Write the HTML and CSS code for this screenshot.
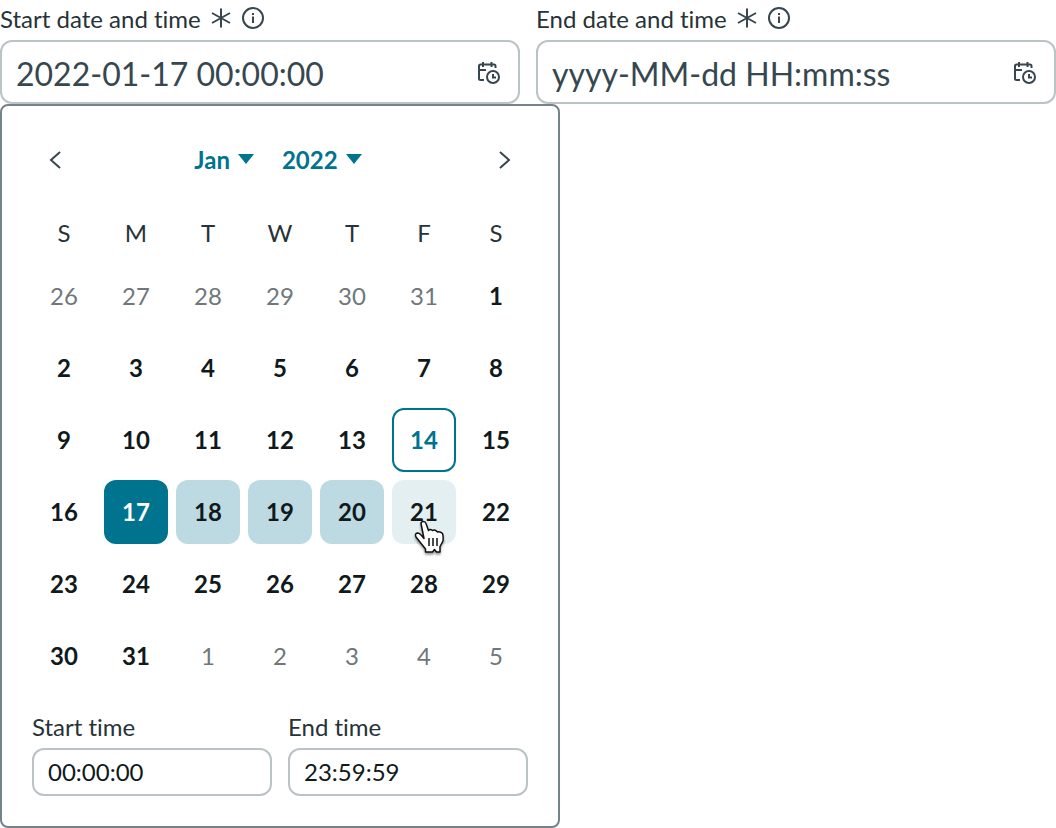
FILE: index.html
```html
<!DOCTYPE html>
<html lang="en">
<head>
  <meta charset="UTF-8">
  <meta name="viewport" content="width=device-width, initial-scale=1.0">
  <title>Date and time range</title>
  <link rel="stylesheet" href="styles.css">
</head>
<body>
  <svg class="sprite" aria-hidden="true">
    <symbol id="asterisk" viewBox="0 0 20 20">
      <path d="M10 0.5V19.5M1 5L19 15M1 15L19 5" />
    </symbol>
    <symbol id="info" viewBox="0 0 24 24">
      <circle cx="12" cy="12" r="10" />
      <path d="M12 10.5V17M12 7V9" />
    </symbol>
    <symbol id="calendar-clock" viewBox="0 0 24 24">
      <path d="M8 20H4.500Q3 20 3 18.500V6Q3 4.500 4.500 4.500H18Q19.500 4.500 19.500 6V8M3 10H10M7 2V7M15.500 2V7" />
      <circle cx="17" cy="17" r="6" />
      <path d="M17 14V17.500H20" />
    </symbol>
  </svg>

  <div class="range">
    <div class="field">
      <div class="field-head">
        <label for="start">Start date and time</label>
        <svg class="icon required"><use href="#asterisk" /></svg>
        <button class="info" type="button" aria-label="About start date"><svg class="icon"><use href="#info" /></svg></button>
      </div>
      <div class="field-box">
        <input type="text" id="start" value="2022-01-17 00:00:00">
        <button class="open" type="button" aria-label="Open calendar"><svg class="icon"><use href="#calendar-clock" /></svg></button>
      </div>
    </div>
    <div class="field">
      <div class="field-head">
        <label for="end">End date and time</label>
        <svg class="icon required"><use href="#asterisk" /></svg>
        <button class="info" type="button" aria-label="About end date"><svg class="icon"><use href="#info" /></svg></button>
      </div>
      <div class="field-box">
        <input type="text" id="end" placeholder="yyyy-MM-dd HH:mm:ss">
        <button class="open" type="button" aria-label="Open calendar"><svg class="icon"><use href="#calendar-clock" /></svg></button>
      </div>
    </div>
  </div>

  <div class="calendar">
    <div class="calendar-nav">
      <button class="step" type="button" aria-label="Previous month">
        <svg class="icon" viewBox="0 0 24 24"><path d="M16 4L7 12L16 20" /></svg>
      </button>
      <div class="pickers">
        <button class="picker" type="button">Jan</button>
        <button class="picker" type="button">2022</button>
      </div>
      <button class="step" type="button" aria-label="Next month">
        <svg class="icon" viewBox="0 0 24 24"><path d="M8 4L17 12L8 20" /></svg>
      </button>
    </div>

    <table class="days">
      <thead>
        <tr><th>S</th><th>M</th><th>T</th><th>W</th><th>T</th><th>F</th><th>S</th></tr>
      </thead>
      <tbody id="days"></tbody>
    </table>

    <div class="times">
      <div class="time">
        <label for="startTime">Start time</label>
        <input type="text" id="startTime" value="00:00:00">
      </div>
      <div class="time">
        <label for="endTime">End time</label>
        <input type="text" id="endTime" value="23:59:59">
      </div>
    </div>
  </div>

  <script src="calendar.js"></script>
</body>
</html>
```
FILE: styles.css
```css
* {
  box-sizing: border-box;
}
body {
  margin: 0;
  background: #fff;
  color: #273338;
  font-family: Lato, sans-serif;
  font-size: 24px;
  font-variant-ligatures: none;
}
button, input {
  font: inherit;
  color: inherit;
}
button {
  padding: 0;
  border: 0;
  background: none;
  cursor: pointer;
}
.sprite {
  display: none;
}
.icon {
  display: block;
  width: 24px;
  height: 24px;
  fill: none;
  stroke: #36474f;
  stroke-width: 2;
}

/* date fields */
.range {
  display: grid;
  grid-template-columns: 1fr 1fr;
  gap: 16px;
}
.field-head {
  display: flex;
  align-items: center;
  height: 36px;
  margin-bottom: 4px;
}
.field-head label {
  padding-top: 2px;
  line-height: 36px;
}
.required {
  width: 20px;
  height: 20px;
  margin: 0 10px;
}
.field-box {
  display: flex;
  align-items: center;
  height: 64px;
  padding: 0 18px 0 14px;
  border: 2px solid #bbc3c6;
  border-radius: 12px;
}
.field-box input {
  flex: 1;
  min-width: 0;
  padding: 2px 0 0;
  border: 0;
  outline: 0;
  background: none;
  color: #36474f;
  font-size: 32px;
}
.field-box input::placeholder {
  color: #36474f;
  opacity: 1;
}

/* calendar popup */
.calendar {
  width: 560px;
  padding: 32px 22px 30px;
  border: 2px solid #74828a;
  border-radius: 8px;
}
.calendar-nav {
  display: flex;
  align-items: center;
  justify-content: space-between;
  height: 44px;
  padding: 0 20px;
}
.pickers {
  display: flex;
  gap: 28px;
  padding: 0 4px 2px 0;
}
.picker {
  display: flex;
  align-items: center;
  gap: 8px;
  color: #00738f;
  font-weight: bold;
}
.picker::after {
  content: "";
  border: 8px solid transparent;
  border-top: 10px solid #00738f;
  border-bottom: 0;
}
.days {
  margin-top: 18px;
  border-spacing: 8px;
  border-collapse: separate;
}
.days th {
  height: 48px;
  padding: 0;
  font-weight: normal;
}
.days td {
  padding: 0;
}
.day {
  display: block;
  width: 64px;
  height: 64px;
  padding-bottom: 2px;
  border-radius: 12px;
  color: #10191c;
  font-weight: bold;
}
.day.outside {
  color: #6f777b;
  font-weight: normal;
}
.day.today {
  border: 2px solid #00738f;
  color: #00738f;
}
.day.start {
  background: #00738f;
  color: #fff;
}
.day.between {
  background: #bdd9e1;
}
.day.hover {
  position: relative;
  background: #e4eff1;
}
.cursor {
  position: absolute;
  top: 35px;
  left: 18px;
  width: 40px;
  height: 44px;
  filter: drop-shadow(0 2px 1px rgba(0, 0, 0, 0.4));
}

/* start and end time */
.times {
  display: grid;
  grid-template-columns: 1fr 1fr;
  gap: 16px;
  margin: 16px 8px 0;
}
.time label {
  display: block;
  height: 36px;
  line-height: 30px;
}
.time input {
  display: block;
  width: 100%;
  height: 48px;
  padding: 0 14px 2px;
  border: 2px solid #bbc3c6;
  border-radius: 12px;
  color: #10191c;
}
```
FILE: calendar.js
```js
const daysEl = document.getElementById('days');
const daysBefore = 6;
const daysInMonth = 31;
const today = 14;
const rangeStart = 17;
const hovered = 21;

const cursor = `<svg class="cursor" viewBox="0 0 40 44" aria-hidden="true">
  <path fill="#fff" stroke="#111" stroke-width="1.5" stroke-linejoin="round" d="M11 8.5Q11 6.500 13.500 6.500Q15.500 6.500 16 8.500L18.500 15.500Q20 13.500 22.500 15.500Q25 14 27.500 17Q30 16 32.500 18.500Q33.500 21 33 26L30 31.500V37H26.500L24.500 34.500L22.500 37H15.500V34L6 22Q4.500 18.500 7.500 18Q10 18 14 23.500Z" />
  <path fill="none" stroke="#111" stroke-width="1.5" d="M19 23V31M23 23V31M27 23V31" />
</svg>`;

function makeDay(offset) {
  const day = offset - daysBefore + 1;
  const button = document.createElement('button');
  button.type = 'button';
  button.className = 'day';
  button.textContent = day;
  if (day < 1) {
    button.textContent = day + 31;
    button.classList.add('outside');
  } else if (day > daysInMonth) {
    button.textContent = day - daysInMonth;
    button.classList.add('outside');
  } else if (day === today) {
    button.classList.add('today');
  } else if (day === rangeStart) {
    button.classList.add('start');
  } else if (day > rangeStart && day < hovered) {
    button.classList.add('between');
  } else if (day === hovered) {
    button.classList.add('hover');
    button.insertAdjacentHTML('beforeend', cursor);
  }
  return button;
}

for (let week = 0; week < 6; week++) {
  const row = daysEl.insertRow();
  for (let i = 0; i < 7; i++) {
    row.insertCell().appendChild(makeDay(week * 7 + i));
  }
}
```
